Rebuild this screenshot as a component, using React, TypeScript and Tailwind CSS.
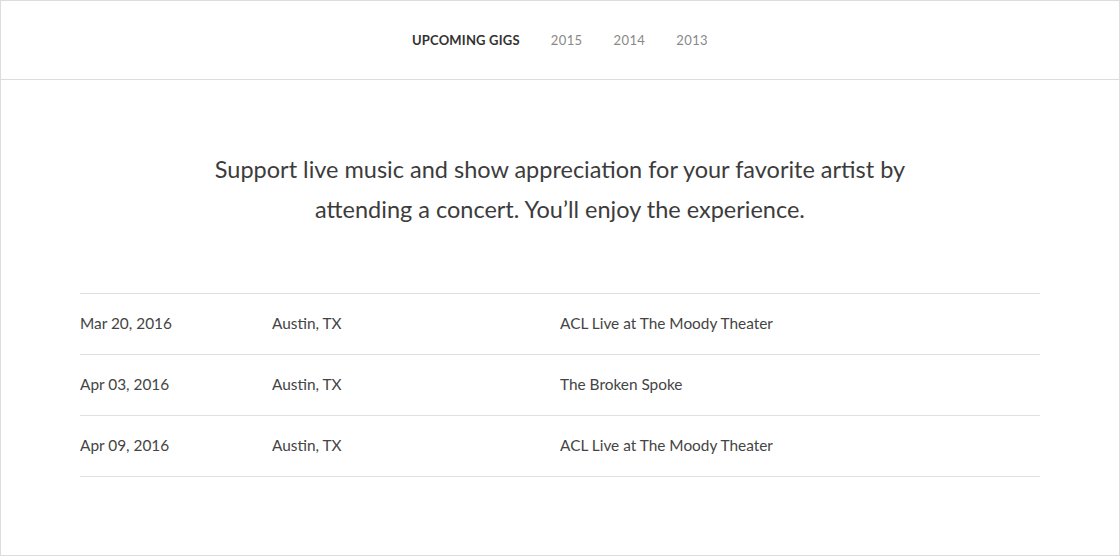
import React from 'react';

const gigs = [
  { date: 'Mar 20, 2016', city: 'Austin, TX', venue: 'ACL Live at The Moody Theater' },
  { date: 'Apr 03, 2016', city: 'Austin, TX', venue: 'The Broken Spoke' },
  { date: 'Apr 09, 2016', city: 'Austin, TX', venue: 'ACL Live at The Moody Theater' },
];

const years = ['2015', '2014', '2013'];

export default function App() {
  return (
    <div
      className="w-full h-[556px] bg-white border border-[#dcdcdc] flex flex-col"
      style={{ fontFamily: 'Lato, "Open Sans", sans-serif' }}
    >
      {/* Top nav */}
      <nav className="h-[79px] pt-[2px] border-b border-[#dcdcdc] flex items-center justify-center gap-[31px] text-[13px]">
        <span className="font-bold uppercase tracking-[0.2px] text-[#333]">Upcoming Gigs</span>
        {years.map((y) => (
          <span key={y} className="text-[#888] tracking-[0.4px]">{y}</span>
        ))}
      </nav>

      <main className="px-[79px] pt-[69px]">
        <p className="mx-auto max-w-[740px] text-center text-[23.5px] leading-[40px] text-[#3c3c3c]">
          Support live music and show appreciation for your favorite artist by attending a concert. You’ll enjoy the experience.
        </p>

        <div className="mt-[64px] border-t border-[#e0e0e0]">
          {gigs.map((g, i) => (
            <div key={i} className="flex h-[61px] items-center border-b border-[#e0e0e0] text-[15.4px] text-[#444]">
              <div className="w-[192px]">{g.date}</div>
              <div className="w-[288px]">{g.city}</div>
              <div className="flex-1">{g.venue}</div>
            </div>
          ))}
        </div>
      </main>
    </div>
  );
}
